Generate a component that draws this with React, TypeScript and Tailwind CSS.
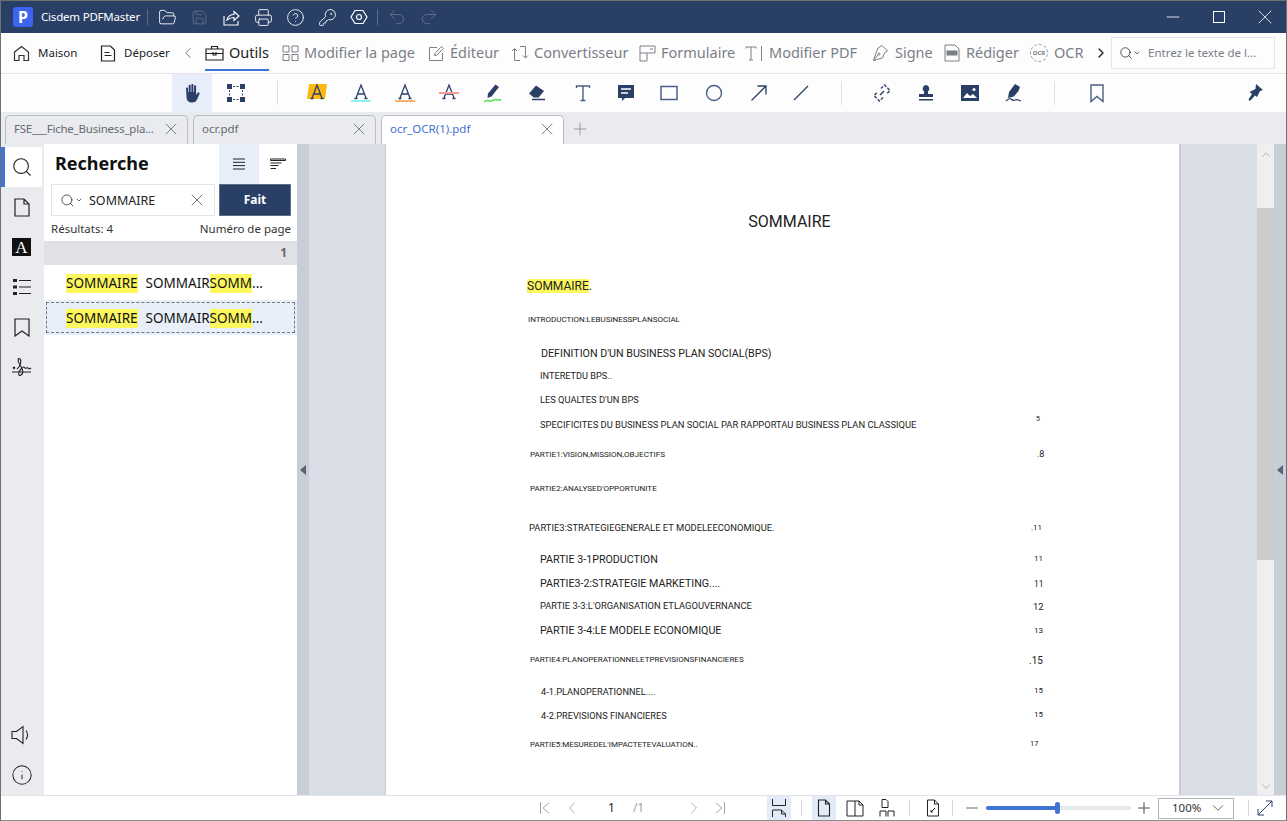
import type { ReactNode } from "react";
import {
  ChevronDown,
  ChevronLeft,
  ChevronRight,
  ChevronUp,
  CircleHelp,
  FolderOpen,
  Info,
  KeyRound,
  Minus,
  Plus,
  Printer,
  Redo2,
  Save,
  Search,
  Undo2,
  X,
} from "lucide-react";

const NAVY = "#2a3f66";

// lines of the PDF page: left, top, size, text
const PDF_LINES: [number, number, number, string][] = [
  [142, 172, 8, "INTRODUCTION:LEBUSINESSPLANSOCIAL"],
  [155, 205, 10.7, "DEFINITION D'UN BUSINESS PLAN SOCIAL(BPS)"],
  [154, 227, 9.2, "INTERETDU BPS.."],
  [154, 251, 9.3, "LES QUALTES D'UN BPS"],
  [154, 276, 9.4, "SPECIFICITES DU BUSINESS PLAN SOCIAL PAR RAPPORTAU BUSINESS PLAN CLASSIQUE"],
  [144, 306, 8.1, "PARTIE1:VISION,MISSION,OBJECTIFS"],
  [144, 340, 8.1, "PARTIE2:ANALYSED'OPPORTUNITE"],
  [143, 379, 9.4, "PARTIE3:STRATEGIEGENERALE ET MODELEECONOMIQUE."],
  [154, 411, 10.7, "PARTIE 3-1PRODUCTION"],
  [154, 435, 10.7, "PARTIE3-2:STRATEGIE MARKETING...."],
  [154, 457, 9.35, "PARTIE 3-3:L'ORGANISATION ETLAGOUVERNANCE"],
  [154, 482, 10.7, "PARTIE 3-4:LE MODELE ECONOMIQUE"],
  [144, 512, 8, "PARTIE4:PLANOPERATIONNELETPREVISIONSFINANCIERES"],
  [155, 543, 9.2, "4-1.PLANOPERATIONNEL...."],
  [155, 567, 9.2, "4-2.PREVISIONS FINANCIERES"],
  [144, 597, 8, "PARTIE5:MESUREDEL'IMPACTETEVALUATION.."],
  [650, 272, 7, "5"],
  [651, 306, 9, ".8"],
  [645, 380, 8, ".11"],
  [648, 411, 8, "11"],
  [648, 436, 8.5, "11"],
  [647, 458, 9.5, "12"],
  [648, 483, 8, "13"],
  [643, 512, 10, ".15"],
  [648, 543, 8, "15"],
  [648, 567, 8, "15"],
  [644, 596, 7.5, "17"],
];

const TitleIcon = ({ children }: { children: ReactNode }) => (
  <span className="flex w-[32px] justify-center text-white">{children}</span>
);

const MenuItem = ({ icon, label, width, iconBox }: { icon: ReactNode; label: string; width: string; iconBox: string }) => (
  <div className={`flex items-center text-[14.5px] text-[#7b7f87] ${width}`}>
    <span className={`flex shrink-0 ${iconBox}`}>{icon}</span>
    <span className="whitespace-nowrap">{label}</span>
  </div>
);

const GlyphA = ({ bar, wavy, strike, bg }: { bar?: string; wavy?: boolean; strike?: boolean; bg?: boolean }) => (
  <svg width="22" height="22" viewBox="0 0 22 22" fill="none">
    {bg && <path d="M3 2h18l-2 15H1z" fill="#fdb813" />}
    <path d="M6 16 11 3l5 13M7.500 12h7M4.500 16.500h3M14.500 16.500h3" stroke={NAVY} strokeWidth="1.300" />
    {bar && <rect x="1" y="18" width="20" height="2" fill={bar} />}
    {wavy && <path d="M1 19c1.500-1.400 2.500 1.400 4 0s2.500 1.400 4 0 2.500 1.400 4 0 2.500 1.400 4 0 2.500 1.400 4 0" stroke="#f58a1f" strokeWidth="1.200" />}
    {strike && <rect x="1" y="10" width="20" height="2" fill="#f79a9a" />}
  </svg>
);

const Tool = ({ children }: { children: ReactNode }) => (
  <div className="flex h-full w-[44px] shrink-0 items-center justify-center">{children}</div>
);

const ToolSep = ({ margin }: { margin: string }) => <div className={`h-[24px] w-px shrink-0 bg-[#dcdee3] ${margin}`} />;

const Tab = ({ label, active, labelClass }: { label: string; active?: boolean; labelClass?: string }) => (
  <div
    className={`flex h-[29px] w-[183px] items-center justify-between rounded-t-[5px] border border-b-0 border-[#b9bcc4] pb-[2px] pl-[8px] pr-[6px] text-[11.5px] ${
      active ? "bg-white text-[#3f6fd1]" : "bg-[#eaebef] text-[#666a72]"
    }`}
  >
    <span className={`whitespace-nowrap ${labelClass ?? ""}`}>{label}</span>
    <X size={20} strokeWidth={1} className="text-[#666a72]" />
  </div>
);

const ResultText = () => (
  <>
    <span className="bg-[#fdf75e] leading-[19px]">SOMMAIRE</span>
    <span className="ml-[8px]">SOMMAIR</span>
    <span className="bg-[#fdf75e] leading-[19px]">SOMM</span>
    <span>...</span>
  </>
);

const RailIcon = ({ children, active }: { children: ReactNode; active?: boolean }) => (
  <div
    className={`mr-[2px] flex h-[40px] items-center justify-center ${
      active ? "border-l-[4px] border-[#3f74d6] bg-white pr-[4px]" : ""
    }`}
  >
    {children}
  </div>
);

const StatusIcon = ({ children, active, margin }: { children: ReactNode; active?: boolean; margin?: string }) => (
  <div className={`flex h-full w-[24px] shrink-0 items-center justify-center ${active ? "bg-[#e3ebf8]" : ""} ${margin ?? ""}`}>
    {children}
  </div>
);

const StatusSep = ({ margin }: { margin: string }) => <div className={`h-[16px] w-px shrink-0 bg-[#d5d7dc] ${margin}`} />;

export default function App() {
  return (
    <div
      className="flex h-[821px] w-[1287px] flex-col overflow-hidden border-x border-t border-[#6f6f6f] bg-white text-[#222]"
      style={{ fontFamily: '"Noto Sans", "Open Sans", sans-serif' }}
    >
      {/* title bar */}
      <div className="flex h-[32px] shrink-0 items-center bg-[#2a3f66] text-white">
        <div className="ml-[12px] flex h-[20px] w-[20px] items-center justify-center rounded-[3px] bg-[#3c64ef] text-[16px] font-bold leading-none">
          P
        </div>
        <span className="ml-[8px] w-[100px] whitespace-nowrap text-[11.5px] tracking-[-0.2px]">Cisdem PDFMaster</span>
        <div className="ml-[6px] mr-[3px] h-[16px] w-px bg-[#5c6d8d]" />
        <TitleIcon><FolderOpen size={19} strokeWidth={1.100} /></TitleIcon>
        <TitleIcon><Save size={17} strokeWidth={1.100} className="text-[#66758f]" /></TitleIcon>
        <TitleIcon>
          <svg width="17" height="17" viewBox="0 0 17 17" fill="none" stroke="currentColor" strokeWidth="1.100">
            <path d="M1 7v9h14v-4M4 11c1-4 4-5.500 7-5.500V2.500L16 7l-5 4.500V8.500c-3 0-5 1-7 2.500z" />
          </svg>
        </TitleIcon>
        <TitleIcon><Printer size={19} strokeWidth={1.100} /></TitleIcon>
        <TitleIcon><CircleHelp size={19} strokeWidth={1.100} /></TitleIcon>
        <TitleIcon><KeyRound size={19} strokeWidth={1.100} /></TitleIcon>
        <TitleIcon>
          <svg width="18" height="18" viewBox="0 0 18 18" fill="none" stroke="currentColor" strokeWidth="1.200">
            <path d="M5 2.500h8L17 9l-4 6.500H5L1 9z" />
            <circle cx="9" cy="9" r="2.500" />
          </svg>
        </TitleIcon>
        <div className="ml-[2px] mr-[3px] h-[16px] w-px bg-[#5c6d8d]" />
        <TitleIcon><Undo2 size={20} strokeWidth={1} className="text-[#66758f]" /></TitleIcon>
        <TitleIcon><Redo2 size={20} strokeWidth={1} className="text-[#66758f]" /></TitleIcon>
        <div className="ml-auto -mr-[2px] flex items-center">
          <span className="flex w-[46px] justify-center"><Minus size={20} strokeWidth={1} /></span>
          <span className="flex w-[46px] justify-center"><span className="h-[12px] w-[12px] border border-white" /></span>
          <span className="flex w-[46px] justify-center"><X size={24} strokeWidth={0.8} /></span>
        </div>
      </div>

      {/* menu bar */}
      <div className="flex h-[41px] shrink-0 items-center border-b border-[#e3e4e8] bg-[#fdfdfe]">
        <div className="ml-[12px] flex w-[87px] items-center gap-[8px] text-[11.5px]">
          <svg width="17" height="17" viewBox="0 0 17 17" fill="none" stroke="#333" strokeWidth="1.200">
            <path d="M1.500 7 8.500 1.500 15.500 7v8.500h-4.500v-5h-5v5h-4.500z" />
          </svg>
          Maison
        </div>
        <div className="flex w-[80px] items-center gap-[8px] text-[11.5px]">
          <svg width="16" height="17" viewBox="0 0 16 17" fill="none" stroke="#222" strokeWidth="1.200">
            <path d="M1.500 1h9l4 4v11h-13zM4.500 7.500h5M4.500 10.500h7" />
          </svg>
          Déposer
        </div>
        <ChevronLeft size={18} strokeWidth={1.300} className="-mx-px text-[#777]" />
        <div className="relative ml-[9px] flex h-full w-[64px] items-center gap-[5px] text-[14.5px] text-[#222]">
          <svg width="19" height="16" viewBox="0 0 19 16" fill="none" stroke="#222" strokeWidth="1.200">
            <path d="M1 4h17v11H1zM1 8.500h17M6.500 4V1.500h6V4M8 7v3h3V7" />
          </svg>
          Outils
          <div className="absolute bottom-[2px] left-0 h-[2px] w-full bg-[#3f74d6]" />
        </div>
        <div className="w-[13px]" />
        <MenuItem
          width="w-[146px]"
          iconBox="w-[22px]"
          label="Modifier la page"
          icon={
            <svg width="17" height="16" viewBox="0 0 17 16" fill="none" stroke="#7b7f87" strokeWidth="1">
              <path d="M1 1h6v6H1zM10 1h6v6h-6zM1 9.500h6v6H1zM10 9.500h6v6h-6z" />
            </svg>
          }
        />
        <MenuItem
          width="w-[83px]"
          iconBox="w-[22px]"
          label="Éditeur"
          icon={
            <svg width="17" height="17" viewBox="0 0 17 17" fill="none" stroke="#7b7f87" strokeWidth="1">
              <path d="M9 2.500H1.500v13h13V8M7 8.500 13.500 1.500l2 2L9 10l-2.500.5z" />
            </svg>
          }
        />
        <MenuItem
          width="w-[128px]"
          iconBox="w-[23px]"
          label="Convertisseur"
          icon={
            <svg width="18" height="17" viewBox="0 0 18 17" fill="none" stroke="#7b7f87" strokeWidth="1">
              <path d="M1 6 3.500 3.500 6 6M3.500 4v11.500H9M9 1.500h5.500V13M12 10.500l2.500 2.500 2.500-2.500" />
            </svg>
          }
        />
        <MenuItem
          width="w-[106px]"
          iconBox="w-[22px]"
          label="Formulaire"
          icon={
            <svg width="17" height="17" viewBox="0 0 17 17" fill="none" stroke="#7b7f87" strokeWidth="1">
              <path d="M1 1h15v7H1zM1 8v8h7V8M11 4h3" />
            </svg>
          }
        />
        <MenuItem
          width="w-[125px]"
          iconBox="w-[24px]"
          label="Modifier PDF"
          icon={
            <svg width="20" height="17" viewBox="0 0 20 17" fill="none" stroke="#7b7f87" strokeWidth="1">
              <path d="M1 3.500V2h10v1.500M6 2v13M4 15h4M16.500 1v15" />
            </svg>
          }
        />
        <MenuItem
          width="w-[74px]"
          iconBox="w-[25px]"
          label="Signe"
          icon={
            <svg width="19" height="18" viewBox="0 0 19 18" fill="none" stroke="#7b7f87" strokeWidth="1">
              <path d="M12 1.500 17.500 7l-3 2-2 5-9 2.500L6 9l2-5zM3.500 16.500 8 11" />
              <circle cx="9" cy="10" r="1" />
            </svg>
          }
        />
        <MenuItem
          width="w-[86px]"
          iconBox="w-[22px]"
          label="Rédiger"
          icon={
            <svg width="16" height="18" viewBox="0 0 16 18" fill="none" stroke="#7b7f87" strokeWidth="1">
              <path d="M1 1h10l4 4v12H1z" />
              <rect x="3" y="7" width="10" height="4" fill="#7b7f87" />
            </svg>
          }
        />
        <MenuItem
          width="w-[63px]"
          iconBox="w-[24px]"
          label="OCR"
          icon={
            <span className="flex h-[18px] w-[18px] items-center justify-center rounded-full border border-dashed border-[#8a8e96] text-[6px] font-bold">
              OCR
            </span>
          }
        />
        <ChevronRight size={16} strokeWidth={2} className="shrink-0 text-[#222]" />
        <div className="ml-[2px] flex h-[32px] w-[164px] shrink-0 items-center gap-[7px] border border-[#e3e4e8] pl-[7px] text-[11.5px] text-[#7b7f87]">
          <span className="flex shrink-0 items-center text-[#222]">
            <Search size={14} strokeWidth={1.300} />
            <ChevronDown size={8} strokeWidth={2} />
          </span>
          <span className="whitespace-nowrap">Entrez le texte de l...</span>
        </div>
      </div>

      {/* tool bar */}
      <div className="flex h-[38px] shrink-0 items-center bg-[#fdfdfe] pl-[171px]">
        <div className="mr-[2px] flex h-full w-[40px] items-center justify-center bg-[#e8eef9]">
          <svg width="18" height="20" viewBox="0 0 18 20" fill={NAVY}>
            <path d="M3 5.500c0-1.400 2-1.400 2 0V9h.7V2.800c0-1.400 2-1.400 2 0V9h.7V2c0-1.400 2-1.400 2 0v7h.7V3.300c0-1.400 2-1.400 2 0V12l1.600-2.300c.9-1.200 2.500-.2 1.800 1L14.300 16c-1 2.500-2.500 3.500-5 3.500-3.800 0-5.800-2-5.800-6z" />
          </svg>
        </div>
        <Tool>
          <svg width="18" height="18" viewBox="0 0 18 18" fill={NAVY}>
            <path d="M0 0h5v5H0zM13 0h5v5h-5zM0 13h5v5H0zM13 13h5v5h-5z" />
            <path d="M6 2.500h6M6 15.500h6M2.500 6v6M15.500 6v6" stroke={NAVY} strokeDasharray="2 1.500" fill="none" />
          </svg>
        </Tool>
        <ToolSep margin="ml-[19px] mr-[17px]" />
        <Tool><GlyphA bg /></Tool>
        <Tool><GlyphA bar="#8af3f2" /></Tool>
        <Tool><GlyphA wavy /></Tool>
        <Tool><GlyphA strike /></Tool>
        <Tool>
          <svg width="20" height="22" viewBox="0 0 20 22" fill="none">
            <path d="M12.500 2.500 16 5l-7.500 9.500-4 1.500.5-4.500z" fill={NAVY} />
            <path d="M1 20c3-3 5-1 7-1s3-2 5-1.500 3 1 5 0" stroke="#52e04e" strokeWidth="1.500" />
          </svg>
        </Tool>
        <Tool>
          <svg width="20" height="18" viewBox="0 0 20 18" fill="none">
            <path d="M9 1.500 17 7l-5 6H7L2.500 9z" fill={NAVY} />
            <path d="M5 15.500h13" stroke={NAVY} strokeWidth="1.500" />
            <path d="M2.500 9 7 13h5" stroke={NAVY} strokeWidth="1.200" />
          </svg>
        </Tool>
        <Tool>
          <svg className="ml-[4px]" width="18" height="18" viewBox="0 0 18 18" fill="none" stroke="#4b5f84" strokeWidth="1.400">
            <path d="M2.500 4V2h13v2M9 2v14M6.500 16.500h5" />
          </svg>
        </Tool>
        <Tool>
          <svg className="ml-[2px]" width="18" height="18" viewBox="0 0 18 18">
            <path d="M1 1h16v13H8l-3 3v-3H1z" fill={NAVY} />
            <path d="M4 5h10M4 9h7" stroke="#fff" strokeWidth="1.400" />
          </svg>
        </Tool>
        <Tool>
          <svg width="18" height="16" viewBox="0 0 18 16" fill="none" stroke="#4b5f84" strokeWidth="1.500">
            <path d="M1 1.500h16v13H1z" />
          </svg>
        </Tool>
        <Tool>
          <svg className="ml-[2px]" width="18" height="18" viewBox="0 0 18 18" fill="none" stroke="#4b5f84" strokeWidth="1.400">
            <circle cx="9" cy="9" r="7.500" />
          </svg>
        </Tool>
        <Tool>
          <svg className="ml-[3px]" width="18" height="18" viewBox="0 0 18 18" fill="none" stroke={NAVY} strokeWidth="1.300">
            <path d="M1.500 16.500 16 2M7.500 2H16v8.500" />
          </svg>
        </Tool>
        <Tool>
          <svg width="16" height="16" viewBox="0 0 16 16" fill="none" stroke={NAVY} strokeWidth="1.200">
            <path d="M1 15 15 1" />
          </svg>
        </Tool>
        <ToolSep margin="ml-[18px] mr-[18px]" />
        <Tool>
          <svg width="18" height="18" viewBox="0 0 18 18" fill="none" stroke={NAVY} strokeWidth="1.400">
            <path d="M8 4.500 11.500 1 17 6.500 13.500 10M10 13.500 6.500 17 1 11.500 4.500 8" strokeDasharray="3 1.500" />
            <path d="M7 11l4-4" />
          </svg>
        </Tool>
        <Tool>
          <svg width="18" height="18" viewBox="0 0 18 18" fill={NAVY}>
            <path d="M9 1a3.500 3.500 0 0 1 2 6.200V10h5v3H2v-3h5V7.200A3.500 3.500 0 0 1 9 1zM2 15h14v1.500H2z" />
          </svg>
        </Tool>
        <Tool>
          <svg width="18" height="16" viewBox="0 0 18 16">
            <path d="M0 0h18v16H0z" fill={NAVY} />
            <path d="M2 13l4-5 3 3 3-2 4 4z" fill="#fff" />
            <circle cx="13" cy="4.500" r="1.500" fill="#fff" />
          </svg>
        </Tool>
        <Tool>
          <svg width="20" height="20" viewBox="0 0 20 20" fill="none">
            <path d="M11 1l5 3-1.500 4-4.500 5.500-6 1.500 1-6z" fill={NAVY} />
            <path d="M2 18c2-2 4-3 5-2s2 2 4 1 3 0 6 1" stroke={NAVY} strokeWidth="1.200" />
          </svg>
        </Tool>
        <ToolSep margin="ml-[18px] mr-[20px]" />
        <Tool>
          <svg width="14" height="19" viewBox="0 0 14 19" fill="none" stroke="#4b5f84" strokeWidth="1.400">
            <path d="M1 1h12v16.500l-6-5-6 5z" />
          </svg>
        </Tool>
        <div className="ml-auto mr-[21px]">
          <svg width="20" height="20" viewBox="0 0 20 20" fill={NAVY}>
            <path d="M11 1l7 6-3 1-3 6-2-1.500L5 18l-1.500-1.500L7 11 4.500 9l6-3z" />
          </svg>
        </div>
      </div>

      {/* tabs */}
      <div className="flex h-[32px] shrink-0 items-end gap-[5px] bg-[#eaebef] pl-[4px]">
        <Tab label="FSE___Fiche_Business_pla..." labelClass="tracking-[-0.22px]" />
        <Tab label="ocr.pdf" />
        <Tab label="ocr_OCR(1).pdf" active />
        <Plus size={20} strokeWidth={1} className="mb-[5px] ml-[1px] text-[#8a8d94]" />
      </div>

      {/* main */}
      <div className="flex min-h-0 flex-1">
        <div className="flex w-[43px] shrink-0 flex-col bg-[#eaebef] pt-[3px]">
          <RailIcon active><Search size={22} strokeWidth={1.200} color="#222" /></RailIcon>
          <RailIcon>
            <svg width="16" height="19" viewBox="0 0 16 19" fill="none" stroke="#222" strokeWidth="1.200">
              <path d="M1 1h9l5 5v12H1zM10 1v5h5" />
            </svg>
          </RailIcon>
          <RailIcon>
            <div className="flex h-[18px] w-[19px] items-center justify-center bg-[#111] font-['Liberation_Serif',serif] text-[17px] leading-none text-white">
              A
            </div>
          </RailIcon>
          <RailIcon>
            <svg width="18" height="16" viewBox="0 0 18 16">
              <path d="M0 0h4v3H0zM0 6.500h4v3H0zM0 13h4v3H0z" fill="#222" />
              <path d="M6 1.500h12M6 8h12M6 14.500h12" stroke="#222" strokeWidth="1.200" />
            </svg>
          </RailIcon>
          <RailIcon>
            <svg width="16" height="19" viewBox="0 0 16 19" fill="none" stroke="#222" strokeWidth="1.200">
              <path d="M1 1h14v17l-7-5-7 5z" />
            </svg>
          </RailIcon>
          <RailIcon>
            <svg width="21" height="20" viewBox="0 0 21 20" fill="none" stroke="#222" strokeWidth="1.100">
              <path d="M1 15h19M2 10l2 2M4 10l-2 2" />
              <path d="M6 12c3-2 5-8 3-10S6 4 9 8s4 8 1 10-3-3 0-6 3-2 4-1 2-1 3 0 2 1 3 0" />
            </svg>
          </RailIcon>
          <div className="mt-auto flex flex-col">
            <RailIcon>
              <svg width="21" height="20" viewBox="0 0 21 20" fill="none" stroke="#222" strokeWidth="1.100">
                <path d="M1 6.500h4.500L12 1.500v17l-6.500-5H1zM15 5.500c2 2.500 2 6.500 0 9" />
              </svg>
            </RailIcon>
            <RailIcon><Info size={22} strokeWidth={1.100} color="#222" /></RailIcon>
          </div>
        </div>

        {/* search panel */}
        <div className="flex w-[253px] shrink-0 flex-col bg-white">
          <div className="flex h-[40px] items-center">
            <span className="ml-[11px] -mt-[2px] text-[18px] font-bold text-[#111]">Recherche</span>
            <div className="ml-auto flex h-full">
              <div className="flex w-[40px] items-center justify-center bg-[#e8eef9]">
                <svg width="14" height="12" viewBox="0 0 14 12" stroke="#222">
                  <path d="M1 1h12M1 4.300h12M1 7.600h12M1 11h12" />
                </svg>
              </div>
              <div className="flex w-[38px] items-center justify-center">
                <svg width="16" height="12" viewBox="0 0 16 12" fill="none" stroke="#222">
                  <path d="M.5 1h15v1.500H.5zM.5 5h11M.5 7.500h8M.5 10.500h5.500" />
                </svg>
              </div>
            </div>
          </div>
          <div className="flex h-[32px] items-stretch pl-[7px] pr-[6px]">
            <div className="flex w-[164px] items-center border border-[#e3e4e8] pl-[8px] pr-[7px] text-[12.500px] text-[#222]">
              <Search size={15} strokeWidth={1.200} />
              <ChevronDown size={8} strokeWidth={2} />
              <span className="ml-[6px] mt-[2px]">SOMMAIRE</span>
              <X size={20} strokeWidth={1} className="ml-auto text-[#555]" />
            </div>
            <div className="ml-[4px] flex flex-1 items-center justify-center border border-[#5e6d88] bg-[#2a3f66] text-[12px] font-bold text-white">
              Fait
            </div>
          </div>
          <div className="flex h-[25px] items-center justify-between pl-[7px] pr-[6px] text-[11.5px] text-[#333]">
            <span>Résultats: 4</span>
            <span>Numéro de page</span>
          </div>
          <div className="flex h-[24px] items-center justify-end bg-[#e0e1e5] pr-[10px] text-[12px] font-bold text-[#666]">1</div>
          <div className="h-[3px]" />
          <div className="flex h-[31px] items-center pl-[22px] text-[13.500px] text-[#111]">
            <ResultText />
          </div>
          <div className="h-px" />
          <div className="h-[35px] bg-[#e8eff9] p-[2px]">
            <div className="flex h-full items-center border border-dashed border-[#6f7480] pl-[19px] pt-px text-[13.500px] text-[#111]">
              <ResultText />
            </div>
          </div>
        </div>

        {/* viewer */}
        <div className="flex w-[12px] shrink-0 items-center justify-center bg-[#c9cdd7]">
          <span className="h-0 w-0 border-y-[5px] border-r-[6px] border-y-transparent border-r-[#5c6070]" />
        </div>
        <div className="flex flex-1 overflow-hidden bg-[#d9dde6]">
          <div className="w-[76px] shrink-0" />
          <div className="relative w-[796px] shrink-0 border-l border-r-2 border-[#c9cdd7] bg-white font-['Roboto',sans-serif] text-[#222]">
            <div className="mt-[66px] pl-[14px] text-center text-[16px]">SOMMAIRE</div>
            <div className="ml-[141px] mt-[44px] text-[12px] leading-[17px]">
              <span className="bg-[#fdf75e]">SOMMAIRE</span>.
            </div>
            {PDF_LINES.map(([left, top, size, text]) => (
              <span
                key={text + left + top}
                className="absolute whitespace-nowrap leading-none"
                style={{ left, top, fontSize: size }}
              >
                {text}
              </span>
            ))}
          </div>
          <div className="w-[76px] shrink-0" />
          <div className="flex w-[17px] shrink-0 flex-col bg-[#efefef]">
            <ChevronUp size={14} strokeWidth={1.500} className="mx-auto mt-[2px] h-[17px] text-[#a8a8a8]" />
            <div className="mt-[45px] h-[352px] bg-[#cbcbcb]" />
            <ChevronDown size={14} strokeWidth={1.500} className="mx-auto mt-auto h-[17px] text-[#a8a8a8]" />
          </div>
          <div className="flex w-[12px] shrink-0 items-center justify-center bg-[#c9cdd7]">
            <span className="h-0 w-0 border-y-[5px] border-r-[6px] border-y-transparent border-r-[#5c6070]" />
          </div>
        </div>
      </div>

      {/* status bar */}
      <div className="flex h-[26px] shrink-0 items-center border-t border-b border-[#e3e4e8] border-b-[#8c8c8c] bg-white text-[12px] text-[#333]">
        <div className="ml-[538px] flex w-[228px] shrink-0 items-center text-[#a0a3aa]">
          <svg width="12" height="12" viewBox="0 0 12 12" fill="none" stroke="currentColor"><path d="M1.500 0v12M10 1 4 6l6 5" /></svg>
          <ChevronLeft size={20} strokeWidth={1} className="ml-[11px]" />
          <span className="ml-[26px] text-[#222]">1</span>
          <span className="ml-[18px]">/1</span>
          <ChevronRight size={20} strokeWidth={1} className="ml-[40px]" />
          <svg className="ml-[10px]" width="12" height="12" viewBox="0 0 12 12" fill="none" stroke="currentColor"><path d="M10.500 0v12M2 1l6 5-6 5" /></svg>
        </div>
        <StatusIcon active>
          <svg width="16" height="18" viewBox="0 0 16 18" fill="none" stroke="#222"><path d="M1.500 0v6.500h13V0M1.500 18v-7h9l4 4v3M10.500 11v4h4" /></svg>
        </StatusIcon>
        <StatusSep margin="ml-[10px] mr-[10px]" />
        <StatusIcon active>
          <svg width="14" height="18" viewBox="0 0 14 18" fill="none" stroke="#222" strokeWidth="1.100">
            <path d="M1.500 1h7l4 4v12h-11zM8.500 1v4h4" />
          </svg>
        </StatusIcon>
        <StatusIcon margin="ml-[7px]">
          <svg width="18" height="17" viewBox="0 0 18 17" fill="none" stroke="#222"><path d="M1 1h8v15H1zM9 1h4l4 4v11H9M13 1v4h4" /></svg>
        </StatusIcon>
        <StatusIcon margin="ml-[8px]">
          <svg width="16" height="18" viewBox="0 0 16 18" fill="none" stroke="#222"><path d="M3 .5h4l2 2v6H3zM1 17.500V12h6v5.500M9 17.500V12h6v5.500" /></svg>
        </StatusIcon>
        <StatusSep margin="ml-[10px] mr-[11px]" />
        <StatusIcon>
          <svg width="14" height="18" viewBox="0 0 14 18" fill="none" stroke="#222"><path d="M1.500 1h7l4 4v12h-11zM8.500 1v4h4M5 13l4-4M5 11v2h2" /></svg>
        </StatusIcon>
        <StatusSep margin="ml-[7px]" />
        <Minus size={18} strokeWidth={1.800} className="ml-[10px] shrink-0 text-[#999]" />
        <div className="relative ml-[5px] h-[4px] w-[145px] shrink-0 rounded-full bg-[#e6e9ec]">
          <div className="h-full w-[72px] rounded-full bg-[#3f74d6]" />
          <div className="absolute left-[69px] top-[-4px] h-[12px] w-[5px] rounded-full bg-[#3f74d6]" />
        </div>
        <Plus size={18} strokeWidth={1.300} className="ml-[4px] shrink-0 text-[#444]" />
        <div className="ml-[5px] flex h-[21px] w-[76px] shrink-0 items-center justify-between border border-[#b0b3b8] pl-[13px] pr-[6px] text-[11.5px]">
          100%
          <ChevronDown size={18} strokeWidth={1} />
        </div>
        <StatusSep margin="ml-[14px]" />
        <svg className="ml-[8px] shrink-0" width="16" height="16" viewBox="0 0 16 16" fill="none" stroke="#2a3f66">
          <path d="M1 15 15 1M9 1h6v6M1 9v6h6" />
        </svg>
      </div>
    </div>
  );
}
